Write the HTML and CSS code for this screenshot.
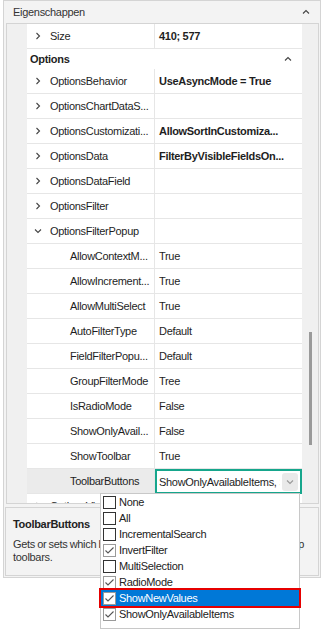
FILE: index.html
```html
<!DOCTYPE html>
<html lang="nl">
<head>
    <meta charset="UTF-8" />
    <title>Eigenschappen</title>
    <link rel="stylesheet" href="styles.css">
</head>
<body>
    <div class="window">
        <div class="titlebar">
            <span>Eigenschappen</span>
            <svg class="caret" width="8" height="8" viewBox="0 0 8 8"><polyline points="1,5.5 4,2.5 7,5.5" /></svg>
        </div>

        <div class="grid">
            <div class="grid-body">
                <div class="row">
                    <div class="indent"></div>
                    <div class="name"><svg class="chev" width="8" height="8" viewBox="0 0 8 8"><polyline points="2.5,1 5.5,4 2.5,7" /></svg>Size</div>
                    <div class="value bold">410; 577</div>
                </div>

                <!-- category -->
                <div class="row cat-row">
                    <div class="indent"></div>
                    <div class="cat">
                        <span>Options</span>
                        <svg class="caret" width="8" height="8" viewBox="0 0 8 8"><polyline points="1,5.5 4,2.5 7,5.5" /></svg>
                    </div>
                </div>

                <div class="row">
                    <div class="indent"></div>
                    <div class="name"><svg class="chev" width="8" height="8" viewBox="0 0 8 8"><polyline points="2.5,1 5.5,4 2.5,7" /></svg>OptionsBehavior</div>
                    <div class="value bold">UseAsyncMode = True</div>
                </div>
                <div class="row">
                    <div class="indent"></div>
                    <div class="name"><svg class="chev" width="8" height="8" viewBox="0 0 8 8"><polyline points="2.5,1 5.5,4 2.5,7" /></svg>OptionsChartDataS...</div>
                    <div class="value"></div>
                </div>
                <div class="row">
                    <div class="indent"></div>
                    <div class="name"><svg class="chev" width="8" height="8" viewBox="0 0 8 8"><polyline points="2.5,1 5.5,4 2.5,7" /></svg>OptionsCustomizati...</div>
                    <div class="value bold">AllowSortInCustomiza...</div>
                </div>
                <div class="row">
                    <div class="indent"></div>
                    <div class="name"><svg class="chev" width="8" height="8" viewBox="0 0 8 8"><polyline points="2.5,1 5.5,4 2.5,7" /></svg>OptionsData</div>
                    <div class="value bold">FilterByVisibleFieldsOn...</div>
                </div>
                <div class="row">
                    <div class="indent"></div>
                    <div class="name"><svg class="chev" width="8" height="8" viewBox="0 0 8 8"><polyline points="2.5,1 5.5,4 2.5,7" /></svg>OptionsDataField</div>
                    <div class="value"></div>
                </div>
                <div class="row">
                    <div class="indent"></div>
                    <div class="name"><svg class="chev" width="8" height="8" viewBox="0 0 8 8"><polyline points="2.5,1 5.5,4 2.5,7" /></svg>OptionsFilter</div>
                    <div class="value"></div>
                </div>
                <div class="row">
                    <div class="indent"></div>
                    <div class="name"><svg class="chev" width="8" height="8" viewBox="0 0 8 8"><polyline points="1,2.5 4,5.5 7,2.5" /></svg>OptionsFilterPopup</div>
                    <div class="value"></div>
                </div>

                <!-- children of OptionsFilterPopup -->
                <div class="row">
                    <div class="indent"></div>
                    <div class="name child">AllowContextM...</div>
                    <div class="value">True</div>
                </div>
                <div class="row">
                    <div class="indent"></div>
                    <div class="name child">AllowIncrement...</div>
                    <div class="value">True</div>
                </div>
                <div class="row">
                    <div class="indent"></div>
                    <div class="name child">AllowMultiSelect</div>
                    <div class="value">True</div>
                </div>
                <div class="row">
                    <div class="indent"></div>
                    <div class="name child">AutoFilterType</div>
                    <div class="value">Default</div>
                </div>
                <div class="row">
                    <div class="indent"></div>
                    <div class="name child">FieldFilterPopu...</div>
                    <div class="value">Default</div>
                </div>
                <div class="row">
                    <div class="indent"></div>
                    <div class="name child">GroupFilterMode</div>
                    <div class="value">Tree</div>
                </div>
                <div class="row">
                    <div class="indent"></div>
                    <div class="name child">IsRadioMode</div>
                    <div class="value">False</div>
                </div>
                <div class="row">
                    <div class="indent"></div>
                    <div class="name child">ShowOnlyAvail...</div>
                    <div class="value">False</div>
                </div>
                <div class="row">
                    <div class="indent"></div>
                    <div class="name child">ShowToolbar</div>
                    <div class="value">True</div>
                </div>
                <div class="row selected">
                    <div class="indent"></div>
                    <div class="name child">ToolbarButtons</div>
                    <div class="value editor">
                        <span class="editor-text">ShowOnlyAvailableItems, ShowNewValues</span>
                        <span class="drop-btn"><svg width="8" height="8" viewBox="0 0 8 8"><polyline points="1,2.5 4,5.5 7,2.5" /></svg></span>
                    </div>
                </div>
                <div class="row">
                    <div class="indent"></div>
                    <div class="name"><svg class="chev" width="8" height="8" viewBox="0 0 8 8"><polyline points="2.5,1 5.5,4 2.5,7" /></svg>OptionsView</div>
                    <div class="value"></div>
                </div>
            </div>
            <div class="scrollbar"><div class="thumb"></div></div>
        </div>

        <div class="desc">
            <div class="desc-title">ToolbarButtons</div>
            <div class="desc-text">Gets or sets which buttons should be displayed in the filter popup<br>toolbars.</div>
        </div>
    </div>

    <!-- checked list dropdown -->
    <div class="popup">
        <div class="opt"><span class="box"></span>None</div>
        <div class="opt"><span class="box"></span>All</div>
        <div class="opt"><span class="box"></span>IncrementalSearch</div>
        <div class="opt"><span class="box checked"><svg width="11" height="11" viewBox="0 0 11 11"><polyline points="1.5,5.5 4,8 9.5,2.5" /></svg></span>InvertFilter</div>
        <div class="opt"><span class="box"></span>MultiSelection</div>
        <div class="opt"><span class="box checked"><svg width="11" height="11" viewBox="0 0 11 11"><polyline points="1.5,5.5 4,8 9.5,2.5" /></svg></span>RadioMode</div>
        <div class="opt sel"><span class="box checked"><svg width="11" height="11" viewBox="0 0 11 11"><polyline points="1.5,5.5 4,8 9.5,2.5" /></svg></span>ShowNewValues</div>
        <div class="opt"><span class="box checked"><svg width="11" height="11" viewBox="0 0 11 11"><polyline points="1.5,5.5 4,8 9.5,2.5" /></svg></span>ShowOnlyAvailableItems</div>
    </div>
</body>
</html>
```

FILE: styles.css
```css
body {
    margin: 0;
    min-height: 630px;
    font-family: 'Segoe UI', 'Liberation Sans', sans-serif;
    font-size: 11px;
    letter-spacing: -0.3px;
    color: #1e1e1e;
    background-color: #fff;
    position: relative;
}

.window {
    margin-left: 3px;
    width: 318px;
    height: 578px;
    box-sizing: border-box;
    border: 1px solid #d4d4d4;
    background-color: #f3f3f3;
    display: flex;
    flex-direction: column;
}

.titlebar {
    height: 22px;
    flex: none;
    display: flex;
    align-items: center;
    justify-content: space-between;
    padding: 0 10px 0 9px;
    color: #333;
}

.caret polyline,
.chev polyline,
.drop-btn polyline {
    fill: none;
    stroke: #444;
    stroke-width: 1.1;
}

.grid {
    height: 481px;
    flex: none;
    box-sizing: border-box;
    margin: 0 1px 0 2px;
    border: 1px solid #d4d4d4;
    background-color: #fff;
    display: flex;
    overflow: hidden;
}

.grid-body {
    flex: 1;
    display: flex;
    flex-direction: column;
    overflow: hidden;
}

.row {
    display: flex;
    height: 25px;
    flex: none;
}

.indent {
    width: 20px;
    flex: none;
    background-color: #f0f0f0;
}

.name {
    width: 128px;
    flex: none;
    box-sizing: border-box;
    display: flex;
    align-items: center;
    gap: 8px;
    padding-left: 7px;
    border-right: 1px solid #e6e6e6;
    border-bottom: 1px solid #e6e6e6;
    white-space: nowrap;
    overflow: hidden;
}

.name.child {
    padding-left: 43px;
}

.value {
    flex: 1;
    min-width: 0;
    box-sizing: border-box;
    display: flex;
    align-items: center;
    padding-left: 4px;
    border-bottom: 1px solid #e6e6e6;
    white-space: nowrap;
    overflow: hidden;
}

.bold {
    font-weight: bold;
}

.cat-row {
    height: 20px;
}

.cat {
    flex: 1;
    display: flex;
    align-items: center;
    justify-content: space-between;
    padding: 0 10px 0 3px;
    font-weight: bold;
}

.selected .name {
    background-color: #ebebeb;
}

.value.editor {
    border: 2px solid #16a68c;
    padding: 0 2px 0 2px;
}

.editor-text {
    flex: 1;
    min-width: 0;
    overflow: hidden;
}

.drop-btn {
    width: 16px;
    height: 18px;
    flex: none;
    margin-left: 2px;
    background-color: #e9e9e9;
    border-radius: 3px;
    display: flex;
    align-items: center;
    justify-content: center;
}

.drop-btn polyline {
    stroke: #999;
}

.scrollbar {
    width: 16px;
    flex: none;
    background-color: #f0f0f0;
    display: flex;
    justify-content: center;
}

.thumb {
    width: 3px;
    height: 113px;
    margin-top: 308px;
    background-color: #9a9a9a;
}

.desc {
    height: 69px;
    flex: none;
    box-sizing: border-box;
    margin: 3px 1px 0 1px;
    border: 1px solid #d4d4d4;
    padding: 9px 7px 0 7px;
    color: #333;
    overflow: hidden;
}

.desc-title {
    font-weight: bold;
    line-height: 14px;
    color: #222;
}

.desc-text {
    margin-top: 7px;
    line-height: 13px;
    white-space: nowrap;
    word-spacing: -0.6px;
}

/* dropdown of the ToolbarButtons editor */
.popup {
    position: absolute;
    left: 100px;
    top: 493px;
    width: 200px;
    height: 136px;
    box-sizing: border-box;
    border: 1px solid #c8c8c8;
    background-color: #fff;
}

.opt {
    height: 16px;
    display: flex;
    align-items: center;
    gap: 3px;
    padding-left: 2px;
    color: #222;
}

.opt.sel {
    background-color: #0078d7;
    color: #fff;
    outline: 2px solid #e60000;
}

.box {
    width: 13px;
    height: 13px;
    flex: none;
    box-sizing: border-box;
    border: 1px solid #333;
    background-color: #fff;
    display: flex;
    align-items: center;
    justify-content: center;
}

.box.checked {
    border-color: #9a9a9a;
}

.box polyline {
    fill: none;
    stroke: #555;
    stroke-width: 1.1;
}
```
